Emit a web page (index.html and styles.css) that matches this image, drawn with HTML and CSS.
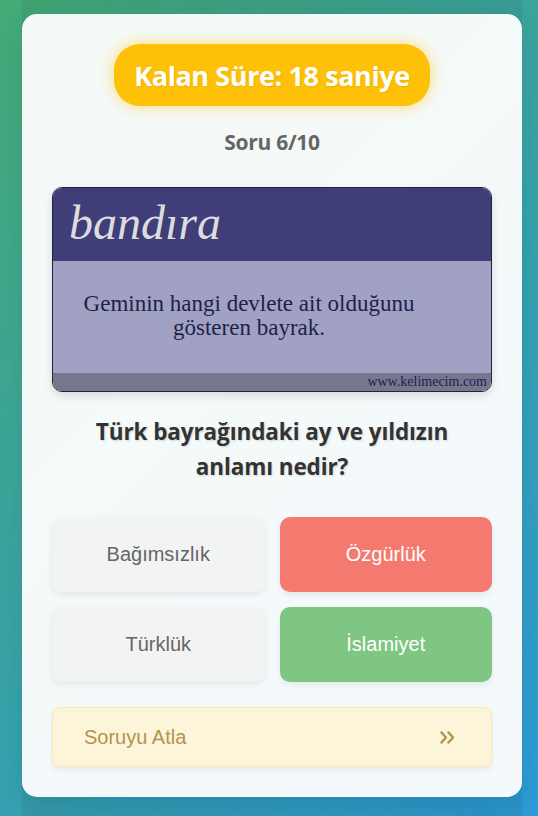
FILE: index.html
```html
<!DOCTYPE html>
<html lang="tr">
<head>
<meta charset="utf-8">
<title>Quiz</title>
<link rel="stylesheet" href="styles.css">
</head>
<body>
<div class="column">
  <main class="card">
    <div class="timer">Kalan Süre: 18 saniye</div>
    <div class="counter">Soru 6/10</div>
    <figure class="word-image">
      <div class="word-head">bandıra</div>
      <div class="word-body">
        <p class="word-def">Geminin hangi devlete ait olduğunu<br>gösteren bayrak.</p>
      </div>
      <div class="word-foot">www.kelimecim.com</div>
    </figure>
    <h2 class="question">Türk bayrağındaki ay ve yıldızın<br>anlamı nedir?</h2>
    <div class="options">
      <button class="option">Bağımsızlık</button>
      <button class="option wrong">Özgürlük</button>
      <button class="option">Türklük</button>
      <button class="option right">İslamiyet</button>
    </div>
    <button class="skip">
      <span>Soruyu Atla</span>
      <svg class="skip-icon" width="15" height="13" viewBox="0 0 15 13" aria-hidden="true">
        <path d="M1.5 1.5 L6 6.5 L1.5 11.5 M8.5 1.5 L13 6.5 L8.5 11.5" fill="none" stroke="currentColor" stroke-width="2.4" stroke-linecap="round" stroke-linejoin="round"/>
      </svg>
    </button>
  </main>
</div>
</body>
</html>
```
FILE: styles.css
```css
html {
  margin: 0;
  height: 100%;
  background: linear-gradient(135deg, #44aa76 0%, #2c9ad6 100%);
}
body {
  margin: 0;
  min-height: 100%;
  font-family: "Open Sans", "Liberation Sans", sans-serif;
}
.column {
  width: 500px;
  margin: 0 0 0 22px;
  min-height: 816px;
  padding-top: 14px;
  box-sizing: border-box;
  background: rgba(0, 0, 0, 0.05);
}
.card {
  background: rgba(255, 255, 255, 0.95);
  border-radius: 15px;
  padding: 30px;
  display: flex;
  flex-direction: column;
  align-items: center;
  box-shadow: 0 8px 24px rgba(0, 0, 0, 0.08);
}
.timer {
  height: 62px;
  box-sizing: border-box;
  padding: 0 20px;
  display: flex;
  align-items: center;
  justify-content: center;
  background: #ffc107;
  color: #fff;
  border-radius: 26px;
  font-weight: 700;
  font-size: 27px;
  letter-spacing: -0.4px;
  box-shadow: 0 0 16px rgba(255, 193, 7, 0.55);
  text-shadow: 1px 1px 2px rgba(0, 0, 0, 0.08);
}
.counter {
  margin-top: 22px;
  font-weight: 700;
  font-size: 21px;
  letter-spacing: -0.3px;
  color: #666;
  line-height: 28px;
}
.word-image {
  margin: 31px 0 0;
  width: 440px;
  height: 205px;
  box-sizing: border-box;
  border: 1px solid #23233a;
  border-radius: 10px;
  overflow: hidden;
  display: flex;
  flex-direction: column;
  box-shadow: 0 4px 10px rgba(0, 0, 0, 0.12);
  font-family: "Liberation Serif", "DejaVu Serif", serif;
}
.word-head {
  height: 73px;
  background: #3f3e78;
  color: #dcdcdc;
  font-style: italic;
  font-size: 48px;
  line-height: 70px;
  padding-left: 16px;
  box-sizing: border-box;
}
.word-body {
  flex: 1;
  background: #a1a1c4;
  display: flex;
  align-items: flex-start;
  justify-content: center;
  padding-right: 46px;
}
.word-def {
  margin: 31px 0 0;
  text-align: center;
  color: #1e1f4b;
  font-size: 23px;
  line-height: 23.5px;
}
.word-foot {
  height: 18px;
  background: #77768f;
  color: #1e1f4b;
  font-size: 14px;
  line-height: 18px;
  text-align: right;
  padding-right: 4px;
}
.question {
  margin: 22px 0 0;
  text-align: center;
  font-weight: 700;
  font-size: 22.5px;
  letter-spacing: -0.1px;
  line-height: 35px;
  color: #333;
  text-shadow: 1px 1px 2px rgba(0, 0, 0, 0.15);
}
.options {
  margin-top: 33px;
  width: 100%;
  display: grid;
  grid-template-columns: 1fr 1fr;
  gap: 15px;
}
.option {
  height: 75px;
  border: none;
  border-radius: 10px;
  background: #f2f3f3;
  color: #666;
  font-family: "Liberation Sans", Arial, sans-serif;
  font-size: 20px;
  box-shadow: 0 3px 6px rgba(0, 0, 0, 0.07);
  padding: 0;
}
.option.wrong {
  background: #f47a70;
  color: #fff;
}
.option.right {
  background: #7fc683;
  color: #fff;
}
.skip {
  margin-top: 25px;
  width: 100%;
  height: 60px;
  box-sizing: border-box;
  border: 1px solid rgba(255, 210, 90, 0.35);
  border-radius: 8px;
  background: #fdf5d9;
  color: #b0944f;
  font-family: "Liberation Sans", Arial, sans-serif;
  font-size: 20px;
  display: flex;
  align-items: center;
  justify-content: space-between;
  padding: 0 36px 0 31px;
  box-shadow: 0 3px 6px rgba(0, 0, 0, 0.06);
}
.skip-icon {
  display: block;
}
```
